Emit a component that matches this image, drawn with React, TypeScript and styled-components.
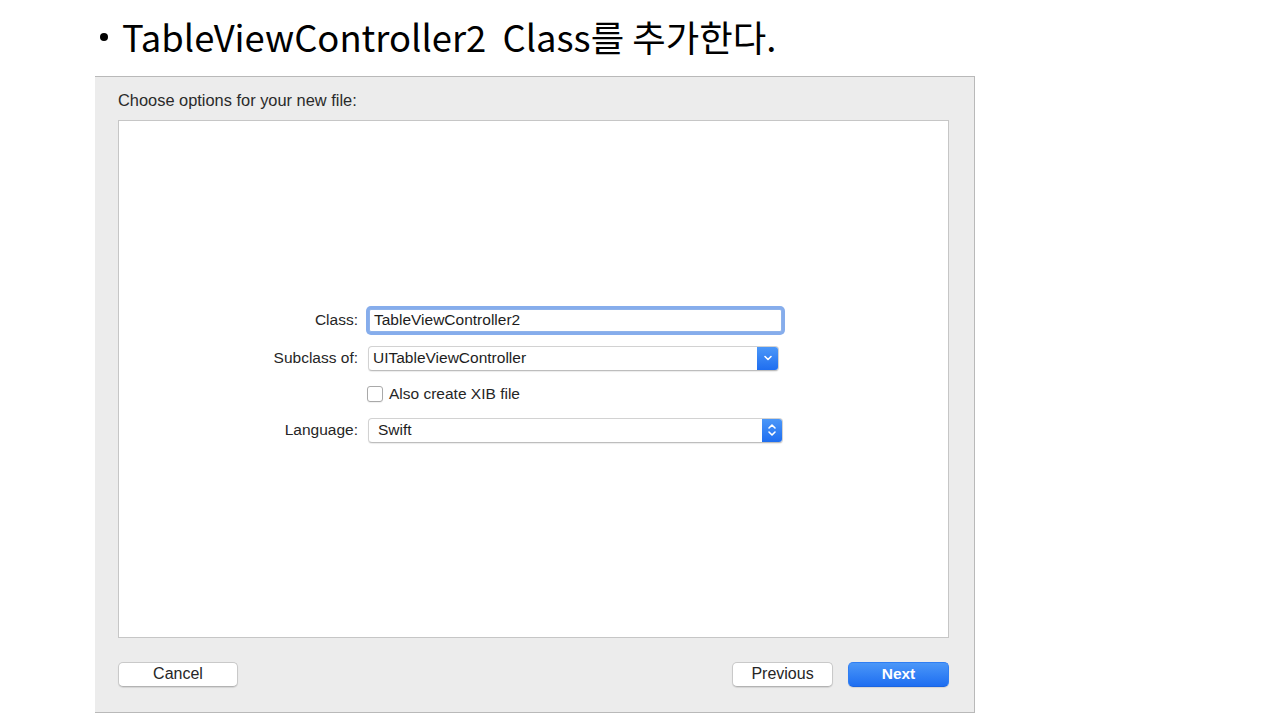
import styled, { createGlobalStyle } from "styled-components";

const GlobalStyle = createGlobalStyle`
  html, body {
    margin: 0;
    padding: 0;
    background: #ffffff;
  }
  body {
    width: 1280px;
    height: 720px;
    overflow: hidden;
    font-family: "Liberation Sans", Arial, sans-serif;
  }
`;

const Slide = styled.div`
  width: 1280px;
  height: 720px;
  display: flex;
  flex-direction: column;
`;

const Title = styled.h1`
  margin: 0;
  height: 76px;
  padding-left: 100px;
  display: flex;
  align-items: center;
  gap: 14px;
  font-family: "Noto Sans CJK KR", "Noto Sans", sans-serif;
  font-weight: 400;
  font-size: 36.4px;
  color: #000;
  white-space: pre;
  box-sizing: border-box;
  padding-bottom: 5px;
`;

const Bullet = styled.span`
  width: 8px;
  height: 8px;
  border-radius: 50%;
  background: #000;
  margin-top: 3px;
`;

const Dialog = styled.div`
  margin-left: 95px;
  width: 880px;
  height: 637px;
  box-sizing: border-box;
  background: #ececec;
  border: 1px solid #b9b9b9;
  border-left: none;
  display: flex;
  flex-direction: column;
  padding: 0 25px 0 23px;
`;

const Prompt = styled.div`
  height: 43px;
  display: flex;
  align-items: center;
  padding-top: 3px;
  box-sizing: border-box;
  font-size: 16.4px;
  color: #2a2a2a;
`;

const Panel = styled.div`
  height: 518px;
  background: #fff;
  border: 1px solid #c6c6c6;
  box-sizing: border-box;
  display: flex;
  align-items: center;
  justify-content: center;
  padding-right: 13px;
  padding-bottom: 10px;
`;

const Form = styled.div`
  display: grid;
  grid-template-columns: 90px 420px;
  column-gap: 8px;
  align-items: center;
`;

const Label = styled.div<{ $h: number }>`
  height: ${(p) => p.$h}px;
  display: flex;
  align-items: center;
  justify-content: flex-end;
  font-size: 15.5px;
  color: #262626;
  white-space: nowrap;
`;

const Field = styled.div<{ $h: number }>`
  height: ${(p) => p.$h}px;
  display: flex;
  align-items: center;
`;

const TextInput = styled.div`
  width: 413px;
  height: 23px;
  margin-left: 3px;
  box-sizing: border-box;
  border: 1px solid #8fb3ea;
  box-shadow: 0 0 0 3px #86adec;
  border-radius: 2px;
  background: #fff;
  display: flex;
  align-items: center;
  padding-left: 4px;
  font-size: 15.5px;
  color: #1d1d1d;
`;

const Popup = styled.div<{ $w: number }>`
  width: ${(p) => p.$w}px;
  height: 25px;
  margin-left: 2px;
  box-sizing: border-box;
  border: 1px solid #d2d2d2;
  border-bottom-color: #bdbdbd;
  border-radius: 4px;
  background: #fff;
  display: flex;
  align-items: stretch;
  overflow: hidden;
  box-shadow: 0 1px 1px rgba(0, 0, 0, 0.08);
`;

const PopupText = styled.div<{ $pad: number }>`
  flex: 1;
  display: flex;
  align-items: center;
  padding-left: ${(p) => p.$pad}px;
  font-size: 15.5px;
  color: #1d1d1d;
`;

const Stepper = styled.div<{ $w: number }>`
  width: ${(p) => p.$w}px;
  background: linear-gradient(#4b97f8, #1f6ef0);
  display: flex;
  align-items: center;
  justify-content: center;
`;

const CheckRow = styled.label`
  display: flex;
  align-items: center;
  gap: 6px;
  margin-left: 1px;
  font-size: 15.5px;
  color: #262626;
`;

const CheckBox = styled.span`
  width: 16px;
  height: 16px;
  box-sizing: border-box;
  border: 1px solid #a9a9a9;
  border-radius: 3px;
  background: #fff;
  box-shadow: 0 1px 1px rgba(0, 0, 0, 0.06);
`;

const Footer = styled.div`
  flex: 1;
  display: flex;
  align-items: center;
  justify-content: space-between;
  padding-bottom: 2px;
`;

const ButtonGroup = styled.div`
  display: flex;
  gap: 15px;
`;

const Button = styled.button<{ $w: number; $primary?: boolean }>`
  width: ${(p) => p.$w}px;
  height: 25px;
  box-sizing: border-box;
  border-radius: 5px;
  font-family: "Liberation Sans", Arial, sans-serif;
  font-size: ${(p) => (p.$primary ? 15.5 : 16)}px;
  padding: 0;
  cursor: pointer;
  border: 1px solid ${(p) => (p.$primary ? "#2f7ef3" : "#c9c9c9")};
  border-bottom-color: ${(p) => (p.$primary ? "#1b64e0" : "#b3b3b3")};
  background: ${(p) =>
    p.$primary ? "linear-gradient(#4b97f8, #1e6ef1)" : "#ffffff"};
  color: ${(p) => (p.$primary ? "#ffffff" : "#262626")};
  font-weight: ${(p) => (p.$primary ? 700 : 400)};
  box-shadow: 0 1px 1px rgba(0, 0, 0, 0.1);
`;

const ChevronDown = () => (
  <svg width="10" height="8" viewBox="0 0 10 8">
    <path d="M2 2.5 L5 5.5 L8 2.5" fill="none" stroke="#fff" strokeWidth="1.6" strokeLinecap="round" strokeLinejoin="round" />
  </svg>
);

const UpDown = () => (
  <svg width="10" height="16" viewBox="0 0 10 16">
    <path d="M2 6 L5 3 L8 6" fill="none" stroke="#fff" strokeWidth="1.6" strokeLinecap="round" strokeLinejoin="round" />
    <path d="M2 10 L5 13 L8 10" fill="none" stroke="#fff" strokeWidth="1.6" strokeLinecap="round" strokeLinejoin="round" />
  </svg>
);

const App = () => {
  return (
    <Slide>
      <GlobalStyle />
      <Title>
        <Bullet />
        <span>TableViewController2  Class를 추가한다.</span>
      </Title>
      <Dialog>
        <Prompt>Choose options for your new file:</Prompt>
        <Panel>
          <Form>
            <Label $h={29}>Class:</Label>
            <Field $h={29}>
              <TextInput>TableViewController2</TextInput>
            </Field>

            <Label $h={25} style={{ marginTop: 11 }}>Subclass of:</Label>
            <Field $h={25} style={{ marginTop: 11 }}>
              <Popup $w={411}>
                <PopupText $pad={4}>UITableViewController</PopupText>
                <Stepper $w={21}>
                  <ChevronDown />
                </Stepper>
              </Popup>
            </Field>

            <Label $h={18} style={{ marginTop: 14 }} />
            <Field $h={18} style={{ marginTop: 14 }}>
              <CheckRow>
                <CheckBox />
                Also create XIB file
              </CheckRow>
            </Field>

            <Label $h={25} style={{ marginTop: 15 }}>Language:</Label>
            <Field $h={25} style={{ marginTop: 15 }}>
              <Popup $w={415}>
                <PopupText $pad={9}>Swift</PopupText>
                <Stepper $w={20}>
                  <UpDown />
                </Stepper>
              </Popup>
            </Field>
          </Form>
        </Panel>
        <Footer>
          <Button $w={120}>Cancel</Button>
          <ButtonGroup>
            <Button $w={101}>Previous</Button>
            <Button $w={101} $primary>
              Next
            </Button>
          </ButtonGroup>
        </Footer>
      </Dialog>
    </Slide>
  );
};

export default App;
